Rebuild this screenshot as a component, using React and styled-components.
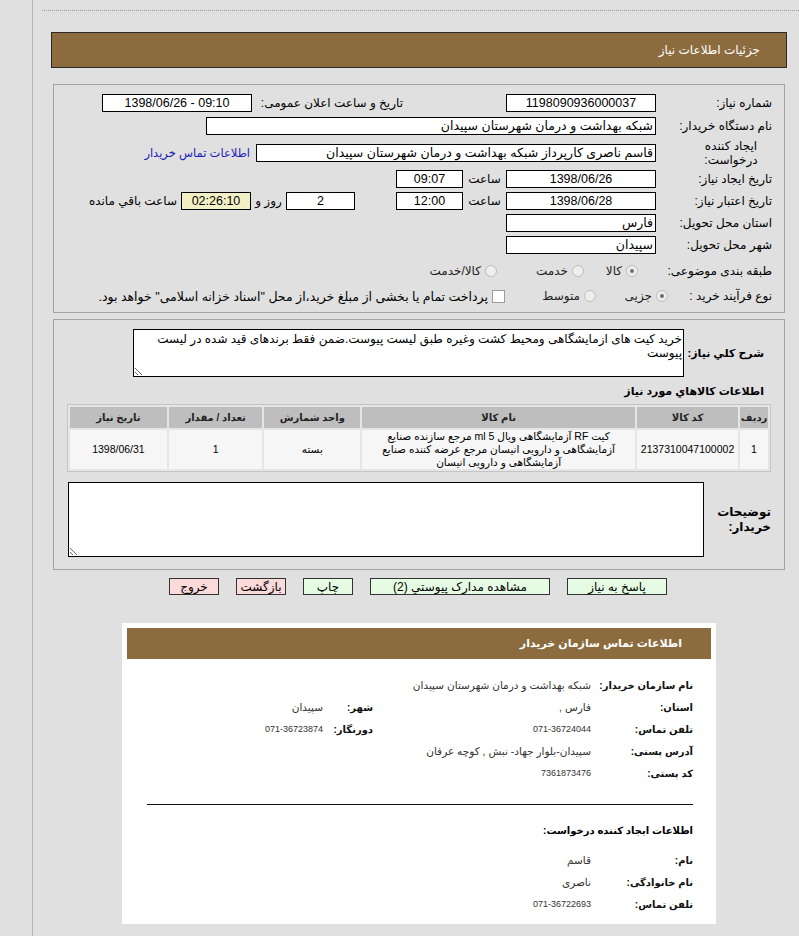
import React from "react";
import styled, { createGlobalStyle } from "styled-components";

const FONT = `"Liberation Sans", "DejaVu Sans", sans-serif`;

const GlobalStyle = createGlobalStyle`
  html, body { margin: 0; padding: 0; }
  body {
    background: #e0e0e0;
    font-family: ${FONT};
    font-size: 12px;
    color: #000;
  }
`;

const Frame = styled.div`
  margin-left: 32px;
  border-left: 1px solid #b4b4b4;
  min-height: 936px;
  padding: 10px 12px 0 18px;
  direction: rtl;
  box-sizing: border-box;
`;

const Dotted = styled.div`
  border-top: 1px dotted #9a9a9a;
  margin: 0 -12px 0 -9px;
`;

const TitleBar = styled.div`
  margin-top: 21px;
  height: 36px;
  box-sizing: border-box;
  background: #8c6c3f;
  border: 1px solid #2a2a2a;
  color: #fff;
  font-size: 12px;
  display: flex;
  align-items: center;
  padding-right: 26px;
`;

const Panel = styled.div`
  margin: ${(p) => p.$mt || 0}px 2px 0 2px;
  border: 1px solid #a3a3a3;
  padding: ${(p) => p.$pad};
  display: flex;
  flex-direction: column;
`;

const Row = styled.div`
  display: flex;
  align-items: center;
  height: ${(p) => p.$h || 22}px;
`;

const Label = styled.div`
  width: ${(p) => p.$w}px;
  flex: none;
  box-sizing: border-box;
  text-align: ${(p) => (p.$wrap ? "center" : "right")};
  font-size: 12px;
  line-height: 14px;
  white-space: ${(p) => (p.$wrap ? "normal" : "nowrap")};
  padding: ${(p) => (p.$wrap ? "0 12px 0 46px" : "0")};
  margin-right: ${(p) => p.$mr || 0}px;
`;

const Box = styled.div`
  width: ${(p) => p.$w}px;
  flex: none;
  height: 18px;
  box-sizing: border-box;
  border: 1px solid #000;
  background: ${(p) => p.$bg || "#fff"};
  text-align: ${(p) => p.$align || "center"};
  direction: ${(p) => (p.$ltr ? "ltr" : "rtl")};
  font-size: 12.5px;
  line-height: 16px;
  padding: 0 2px;
  margin-right: ${(p) => p.$mr || 0}px;
  overflow: hidden;
  white-space: nowrap;
`;

const Plain = styled.div`
  width: ${(p) => (p.$w ? `${p.$w}px` : "auto")};
  flex: none;
  text-align: ${(p) => p.$align || "center"};
  font-size: 12px;
  margin-right: ${(p) => p.$mr || 0}px;
  white-space: nowrap;
`;

const Link = styled.a`
  margin-right: 6px;
  color: #2020b8;
  font-size: 11.5px;
  text-decoration: none;
  white-space: nowrap;
`;

const Choice = styled.div`
  width: ${(p) => (p.$w ? `${p.$w}px` : "auto")};
  flex: none;
  display: flex;
  align-items: center;
  gap: 4px;
  color: #222;
  font-size: 12px;
  white-space: nowrap;
`;

const Note = styled.span`
  color: #000;
  font-size: 12.5px;
`;

const Radio = styled.span`
  width: 12px;
  height: 12px;
  box-sizing: border-box;
  border-radius: 50%;
  border: 1px solid #bdbdbd;
  background: #eeeeee;
  display: inline-flex;
  align-items: center;
  justify-content: center;
  &::after {
    content: "";
    width: 4px;
    height: 4px;
    border-radius: 50%;
    background: ${(p) => (p.$on ? "#6e6e6e" : "transparent")};
  }
`;

const Check = styled.span`
  width: 13px;
  height: 13px;
  box-sizing: border-box;
  border: 1px solid #9c9c9c;
  background: #fff;
  flex: none;
`;

const DescRow = styled.div`
  display: flex;
  align-items: center;
  margin-right: 7px;
`;

const BoldLabel = styled.div`
  font-weight: bold;
  font-size: ${(p) => p.$fs || 11}px;
  line-height: 15px;
  width: ${(p) => (p.$w ? `${p.$w}px` : "auto")};
  flex: none;
  white-space: ${(p) => (p.$nowrap ? "nowrap" : "normal")};
`;

const Area = styled.textarea`
  width: ${(p) => p.$w}px;
  height: ${(p) => p.$h}px;
  box-sizing: border-box;
  border: 1px solid #000;
  background: #fff;
  font-family: ${FONT};
  font-size: 12px;
  line-height: 14px;
  padding: 2px 1px;
  resize: both;
  direction: rtl;
  outline: none;
`;

const Heading = styled.div`
  font-weight: bold;
  font-size: 11px;
  margin: 6px 7px 0 0;
  line-height: 16px;
`;

const Table = styled.table`
  margin-top: 5px;
  border: 1px solid #c4c4c4;
  border-spacing: 2px;
  background: #e6e6e6;
  width: 704px;
  font-size: 10.5px;
`;

const Th = styled.th`
  background: #bebebe;
  height: 21px;
  font-weight: bold;
  font-size: 10px;
  color: #222;
  padding: 0;
  width: ${(p) => p.$w}px;
`;

const Td = styled.td`
  background: #f6f6f6;
  height: 39px;
  text-align: center;
  padding: 0 3px;
  line-height: 13px;
`;

const NotesRow = styled.div`
  display: flex;
  align-items: center;
  margin-top: 10px;
`;

const Buttons = styled.div`
  display: flex;
  justify-content: center;
  gap: 17px;
  margin-top: 8px;
  padding-right: 2px;
`;

const Btn = styled.button`
  width: ${(p) => p.$w}px;
  height: 17px;
  box-sizing: border-box;
  border: 1px solid #333;
  background: ${(p) => (p.$red ? "#fbdada" : "#e6fbe4")};
  font-family: ${FONT};
  font-size: 12px;
  line-height: 14px;
  padding: 0;
  direction: rtl;
  color: #000;
`;

const Card = styled.div`
  width: 594px;
  margin: 28px auto 0;
  background: #fff;
  padding: 5px 5px 9px;
  box-sizing: border-box;
`;

const CardHead = styled.div`
  height: 31px;
  background: #8c6c3f;
  color: #fff;
  font-weight: bold;
  font-size: 11px;
  display: flex;
  align-items: center;
  padding-right: 29px;
`;

const CardBody = styled.div`
  padding: 15px 18px 0 20px;
`;

const InfoRow = styled.div`
  display: flex;
  align-items: center;
  height: 22px;
  margin-top: ${(p) => p.$mt || 0}px;
`;

const Key = styled.div`
  width: ${(p) => p.$w}px;
  flex: none;
  font-weight: bold;
  font-size: 10px;
  color: #111;
  white-space: nowrap;
`;

const Val = styled.div`
  width: ${(p) => (p.$w ? `${p.$w}px` : "auto")};
  flex: none;
  font-size: ${(p) => (p.$num ? 9 : 10.5)}px;
  color: #333;
  white-space: nowrap;
`;

const Rule = styled.div`
  border-top: 1px solid #111;
  margin: 20px 0 0;
`;

const SubHead = styled.div`
  font-weight: bold;
  font-size: 10px;
  margin-top: 15px;
  height: 22px;
  line-height: 22px;
`;

export default function App() {
  return (
    <>
      <GlobalStyle />
      <Frame>
        <Dotted />
        <TitleBar>جزئیات اطلاعات نیاز</TitleBar>

        <Panel $mt={16} $pad="7px 12px 6px 0">
          <Row>
            <Label $w={116}>شماره نیاز:</Label>
            <Box $w={150}>1198090936000037</Box>
            <Label $w={151} $mr={103}>تاریخ و ساعت اعلان عمومی:</Label>
            <Box $w={150} $ltr>1398/06/26 - 09:10</Box>
          </Row>
          <Row $h={24}>
            <Label $w={116}>نام دستگاه خریدار:</Label>
            <Box $w={450} $align="right">شبکه بهداشت و درمان شهرستان سپیدان</Box>
          </Row>
          <Row $h={30}>
            <Label $w={116} $wrap>ایجاد کننده درخواست:</Label>
            <Box $w={400} $align="right">قاسم ناصری کارپرداز شبکه بهداشت و درمان شهرستان سپیدان</Box>
            <Link href="#">اطلاعات تماس خریدار</Link>
          </Row>
          <Row>
            <Label $w={116}>تاریخ ایجاد نیاز:</Label>
            <Box $w={150}>1398/06/26</Box>
            <Plain $w={43}>ساعت</Plain>
            <Box $w={67}>09:07</Box>
          </Row>
          <Row>
            <Label $w={116}>تاریخ اعتبار نیاز:</Label>
            <Box $w={150}>1398/06/28</Box>
            <Plain $w={43}>ساعت</Plain>
            <Box $w={67}>12:00</Box>
            <Box $w={69} $mr={41}>2</Box>
            <Plain $w={35}>روز و</Plain>
            <Box $w={70} $bg="#f4f0c6">02:26:10</Box>
            <Plain $mr={4}>ساعت باقي مانده</Plain>
          </Row>
          <Row>
            <Label $w={116}>استان محل تحویل:</Label>
            <Box $w={150} $align="right">فارس</Box>
          </Row>
          <Row>
            <Label $w={116}>شهر محل تحویل:</Label>
            <Box $w={150} $align="right">سپیدان</Box>
          </Row>
          <Row $h={30}>
            <Label $w={134}>طبقه بندی موضوعی:</Label>
            <Choice $w={54}><Radio $on />کالا</Choice>
            <Choice $w={87}><Radio />خدمت</Choice>
            <Choice><Radio />کالا/خدمت</Choice>
          </Row>
          <Row $h={20}>
            <Label $w={104}>نوع فرآیند خرید :</Label>
            <Choice $w={72}><Radio $on />جزیی</Choice>
            <Choice $w={91}><Radio />متوسط</Choice>
            <Choice><Check /><Note>پرداخت تمام یا بخشی از مبلغ خرید،از محل "اسناد خزانه اسلامی" خواهد بود.</Note></Choice>
          </Row>
        </Panel>

        <Panel $mt={6} $pad="9px 13px 12px 13px">
          <DescRow>
            <BoldLabel $w={80} $nowrap>شرح کلي نياز:</BoldLabel>
            <Area
              $w={551}
              $h={48}
              readOnly
              defaultValue="خرید کیت های ازمایشگاهی ومحیط کشت وغیره طبق لیست پیوست.ضمن فقط برندهای قید شده در لیست پیوست"
            />
          </DescRow>
          <Heading>اطلاعات کالاهاي مورد نياز</Heading>
          <Table>
            <thead>
              <tr>
                <Th $w={28}>ردیف</Th>
                <Th $w={101}>کد کالا</Th>
                <Th $w={274}>نام کالا</Th>
                <Th $w={96}>واحد شمارش</Th>
                <Th $w={94}>تعداد / مقدار</Th>
                <Th $w={97}>تاریخ نیاز</Th>
              </tr>
            </thead>
            <tbody>
              <tr>
                <Td>1</Td>
                <Td>2137310047100002</Td>
                <Td>کیت RF آزمایشگاهی ویال 5 ml مرجع سازنده صنایع آزمایشگاهی و دارویی انیسان مرجع عرضه کننده صنایع آزمایشگاهی و دارویی انیسان</Td>
                <Td>بسته</Td>
                <Td>1</Td>
                <Td>1398/06/31</Td>
              </tr>
            </tbody>
          </Table>
          <NotesRow>
            <BoldLabel $w={67} $fs={12}>توضیحات خریدار:</BoldLabel>
            <Area $w={636} $h={75} readOnly defaultValue="" />
          </NotesRow>
        </Panel>

        <Buttons>
          <Btn $w={100}>پاسخ به نیاز</Btn>
          <Btn $w={180}>مشاهده مدارک پیوستي (2)</Btn>
          <Btn $w={50}>چاپ</Btn>
          <Btn $w={50} $red>بازگشت</Btn>
          <Btn $w={50} $red>خروج</Btn>
        </Buttons>

        <Card>
          <CardHead>اطلاعات تماس سازمان خریدار</CardHead>
          <CardBody>
            <InfoRow>
              <Key $w={102}>نام سازمان خریدار:</Key>
              <Val>شبکه بهداشت و درمان شهرستان سپیدان</Val>
            </InfoRow>
            <InfoRow>
              <Key $w={102}>استان:</Key>
              <Val $w={218}>فارس ,</Val>
              <Key $w={50}>شهر:</Key>
              <Val>سپیدان</Val>
            </InfoRow>
            <InfoRow>
              <Key $w={102}>تلفن تماس:</Key>
              <Val $w={218} $num>071-36724044</Val>
              <Key $w={50}>دورنگار:</Key>
              <Val $num>071-36723874</Val>
            </InfoRow>
            <InfoRow>
              <Key $w={102}>آدرس پستی:</Key>
              <Val>سپیدان-بلوار جهاد- نبش , کوچه عرفان</Val>
            </InfoRow>
            <InfoRow>
              <Key $w={102}>کد پستی:</Key>
              <Val $num>7361873476</Val>
            </InfoRow>
            <Rule />
            <SubHead>اطلاعات ایجاد کننده درخواست:</SubHead>
            <InfoRow $mt={7}>
              <Key $w={102}>نام:</Key>
              <Val>قاسم</Val>
            </InfoRow>
            <InfoRow>
              <Key $w={102}>نام خانوادگی:</Key>
              <Val>ناصری</Val>
            </InfoRow>
            <InfoRow>
              <Key $w={102}>تلفن تماس:</Key>
              <Val $num>071-36722693</Val>
            </InfoRow>
          </CardBody>
        </Card>
      </Frame>
    </>
  );
}
